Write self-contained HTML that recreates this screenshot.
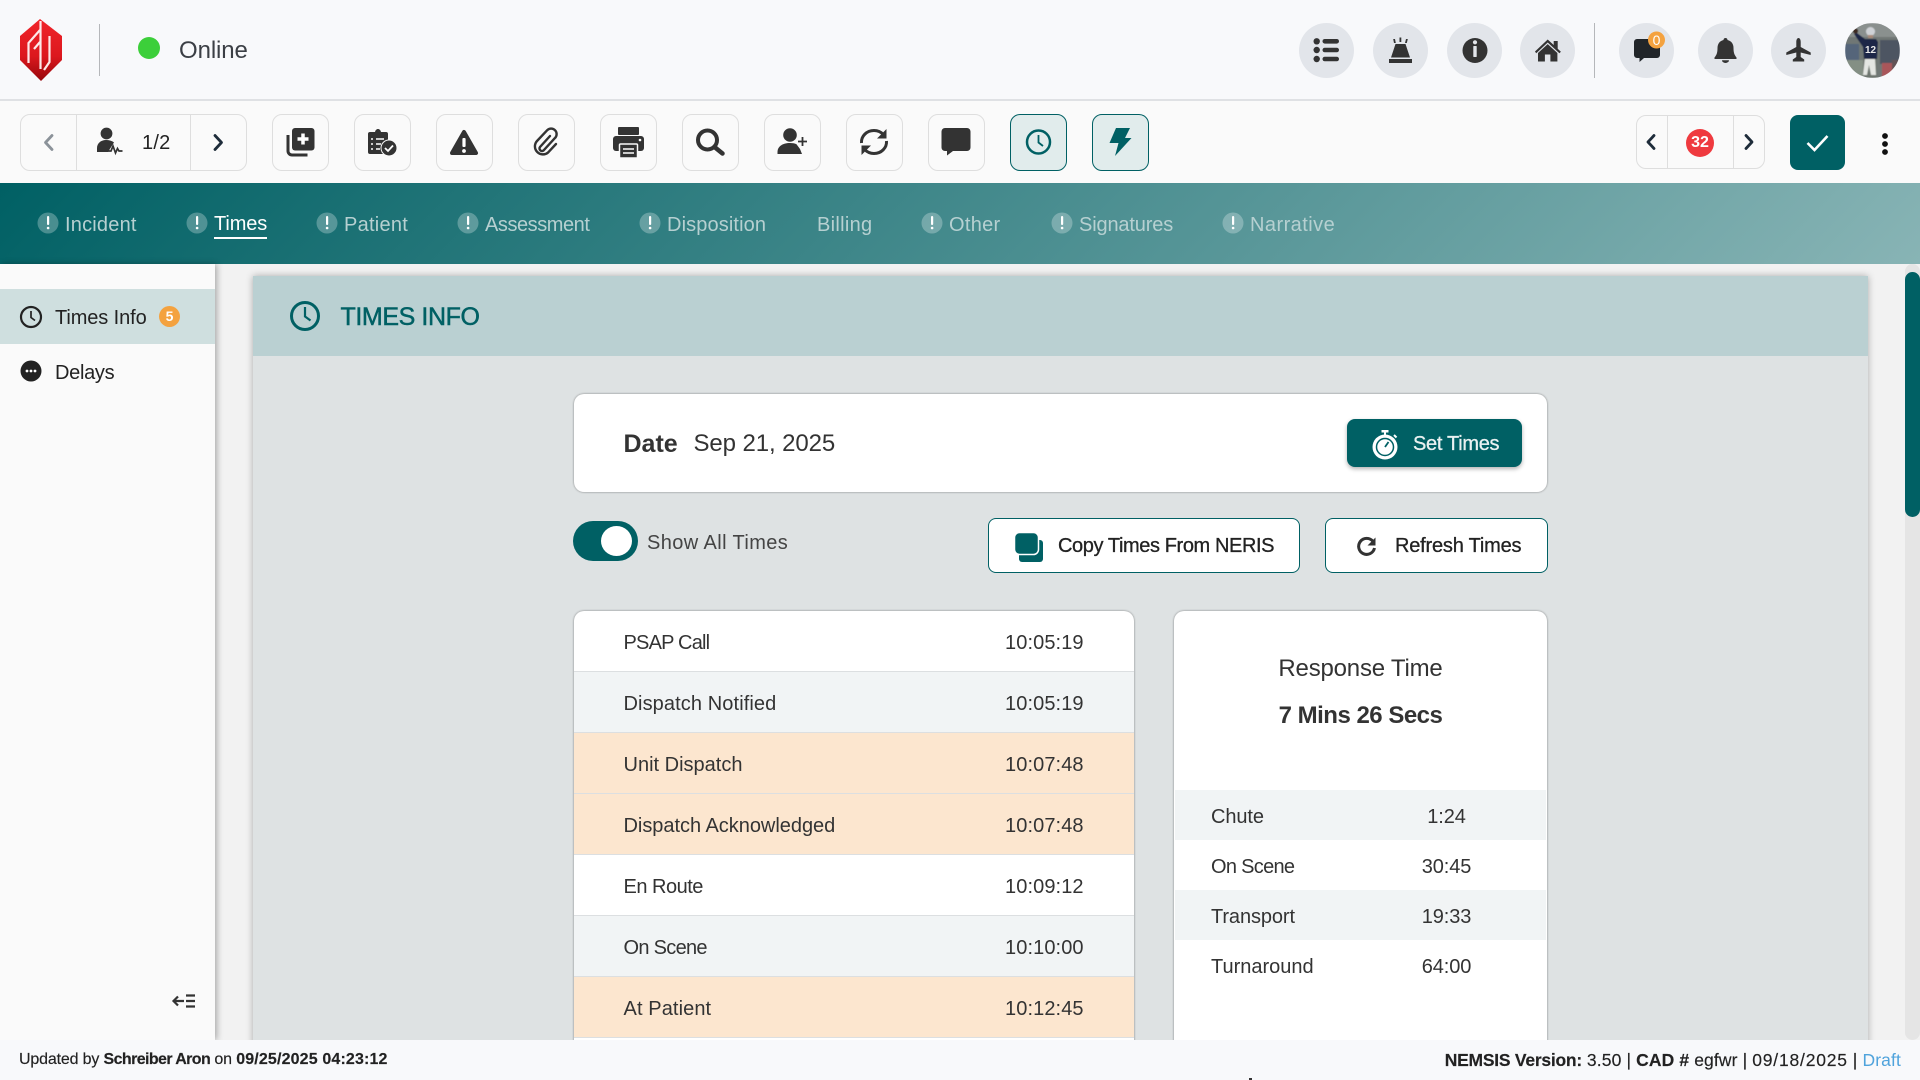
<!DOCTYPE html>
<html lang="en">
<head>
<meta charset="utf-8">
<title>Times Info</title>
<style>
html,body{margin:0;padding:0;width:1920px;height:1080px;overflow:hidden;background:#f2f2f2}
body{position:relative;font-family:"Liberation Sans",sans-serif;color:#333}
.a{position:absolute;box-sizing:border-box}
.t{position:absolute;white-space:nowrap;line-height:24px;font-size:20px;letter-spacing:-.1px}
.btn{position:absolute;box-sizing:border-box;top:114px;width:57px;height:57px;border:1px solid #dedede;border-radius:10px;background:#fafafa}
.btn.on{background:#e1ecec;border-color:#006064}
.c{position:absolute;top:23px;width:55px;height:55px;border-radius:50%;background:#e2e5ea}
.n{color:#b6d0d1;top:213px}
.row{position:absolute;box-sizing:border-box;left:574px;width:560px;height:61px;border-bottom:1px solid #dcdfe1}
.s{position:absolute;left:1175px;width:371px;height:50px}
.m{-webkit-text-stroke:.3px currentColor}
#ic{position:absolute;left:0;top:0;z-index:20;pointer-events:none}
</style>
</head>
<body>
<!-- top header -->
<div class="a" style="left:0;top:0;width:1920px;height:101px;background:#f8f9fb;border-bottom:2px solid #dfe1e4"></div>
<div class="a" style="left:99px;top:24px;width:1px;height:52px;background:#b5b7ba"></div>
<div class="a" style="left:138px;top:37px;width:22px;height:22px;border-radius:50%;background:#3ccf3a"></div>
<span class="t" style="left:179px;top:39px;font-size:24px;letter-spacing:-.1px;color:#3b3f45">Online</span>
<div class="c" style="left:1299px"></div>
<div class="c" style="left:1373px"></div>
<div class="c" style="left:1447px"></div>
<div class="c" style="left:1520px"></div>
<div class="a" style="left:1594px;top:23px;width:1px;height:55px;background:#b5b7ba"></div>
<div class="c" style="left:1619px"></div>
<div class="c" style="left:1698px"></div>
<div class="c" style="left:1771px"></div>

<!-- toolbar -->
<div class="a" style="left:0;top:101px;width:1920px;height:82px;background:#fafafa"></div>
<div class="a" style="left:20px;top:114px;width:227px;height:57px;border:1px solid #dedede;border-radius:10px"></div>
<div class="a" style="left:76px;top:114px;width:1px;height:57px;background:#dedede"></div>
<div class="a" style="left:190px;top:114px;width:1px;height:57px;background:#dedede"></div>
<span class="t" style="left:142px;top:131px;color:#222;letter-spacing:.2px">1/2</span>
<div class="btn" style="left:272px"></div>
<div class="btn" style="left:354px"></div>
<div class="btn" style="left:436px"></div>
<div class="btn" style="left:518px"></div>
<div class="btn" style="left:600px"></div>
<div class="btn" style="left:682px"></div>
<div class="btn" style="left:764px"></div>
<div class="btn" style="left:846px"></div>
<div class="btn" style="left:928px"></div>
<div class="btn on" style="left:1010px"></div>
<div class="btn on" style="left:1092px"></div>
<div class="a" style="left:1636px;top:115px;width:129px;height:54px;border:1px solid #dedede;border-radius:10px"></div>
<div class="a" style="left:1667px;top:115px;width:1px;height:54px;background:#dedede"></div>
<div class="a" style="left:1733px;top:115px;width:1px;height:54px;background:#dedede"></div>
<div class="a" style="left:1686px;top:129px;width:28px;height:28px;border-radius:50%;background:#ef3a3f;color:#fff;font-size:16px;font-weight:700;text-align:center;line-height:28px">32</div>
<div class="a" style="left:1790px;top:115px;width:55px;height:55px;border-radius:8px;background:#006064"></div>

<!-- main nav -->
<div class="a" style="left:0;top:183px;width:1920px;height:81px;background:linear-gradient(135deg,#006064 0%,#88b4b5 100%)"></div>
<span class="t n" style="left:65px;letter-spacing:.2px">Incident</span>
<span class="t n" style="left:214px;top:212px;color:#fff">Times</span>
<div class="a" style="left:214px;top:237px;width:53px;height:2px;background:#fff"></div>
<span class="t n" style="left:344px;letter-spacing:.25px">Patient</span>
<span class="t n" style="left:485px;letter-spacing:-.45px">Assessment</span>
<span class="t n" style="left:667px;letter-spacing:.12px">Disposition</span>
<span class="t n" style="left:817px;letter-spacing:.3px">Billing</span>
<span class="t n" style="left:949px;letter-spacing:.3px">Other</span>
<span class="t n" style="left:1079px;letter-spacing:-.15px">Signatures</span>
<span class="t n" style="left:1250px;letter-spacing:.45px">Narrative</span>

<!-- sidebar -->
<div class="a" style="left:0;top:264px;width:215px;height:776px;background:#fafafa;box-shadow:2px 0 6px rgba(0,0,0,.3)"></div>
<div class="a" style="left:0;top:289px;width:215px;height:55px;background:#cfdfdf"></div>
<span class="t" style="left:55px;top:306px;color:#222">Times Info</span>
<div class="a" style="left:159px;top:306px;width:21px;height:21px;border-radius:50%;background:#f4a23f;color:#fff;font-size:14px;font-weight:700;text-align:center;line-height:21px">5</div>
<span class="t" style="left:55px;top:361px;color:#222;letter-spacing:-.3px">Delays</span>

<!-- card -->
<div class="a" style="left:253px;top:276px;width:1615px;height:800px;background:#dee2e3;box-shadow:0 0 7px rgba(0,0,0,.3)"></div>
<div class="a" style="left:253px;top:276px;width:1615px;height:80px;background:#bad0d2"></div>
<span class="t m" style="left:340.500px;top:305px;font-size:25px;color:#006064;letter-spacing:-.4px;-webkit-text-stroke:.5px #006064">TIMES INFO</span>

<!-- date card -->
<div class="a" style="left:574px;top:394px;width:973px;height:98px;background:#fff;border-radius:10px;box-shadow:0 0 2px rgba(0,0,0,.45)"></div>
<span class="t" style="left:623.500px;top:432px;font-size:25px;font-weight:700;letter-spacing:0;color:#333">Date</span>
<span class="t" style="left:693.500px;top:432px;font-size:24px;color:#333;letter-spacing:-.1px">Sep 21, 2025</span>
<div class="a" style="left:1347px;top:419px;width:175px;height:48px;background:#006064;border-radius:8px;box-shadow:0 2px 4px rgba(0,0,0,.3)"></div>
<span class="t m" style="left:1413px;top:432px;color:#e9f1f1;letter-spacing:-.3px">Set Times</span>

<!-- toggle & buttons -->
<div class="a" style="left:573px;top:521px;width:65px;height:40px;border-radius:20px;background:#006064"></div>
<div class="a" style="left:601px;top:526px;width:31px;height:30px;border-radius:50%;background:#fff"></div>
<span class="t" style="left:647px;top:531px;color:#444;letter-spacing:.4px">Show All Times</span>
<div class="a" style="left:988px;top:518px;width:312px;height:55px;background:#fff;border:1px solid #006064;border-radius:8px"></div>
<span class="t m" style="left:1058px;top:534px;color:#222;letter-spacing:-.4px">Copy Times From NERIS</span>
<div class="a" style="left:1325px;top:518px;width:223px;height:55px;background:#fff;border:1px solid #006064;border-radius:8px"></div>
<span class="t m" style="left:1395px;top:534px;color:#222;letter-spacing:-.2px">Refresh Times</span>

<!-- times table -->
<div class="a" style="left:574px;top:611px;width:560px;height:470px;background:#fff;border-radius:10px;box-shadow:0 0 2px rgba(0,0,0,.45);overflow:hidden"></div>
<div class="row" style="top:611px;border-radius:10px 10px 0 0"></div>
<div class="row" style="top:672px;background:#f1f4f5"></div>
<div class="row" style="top:733px;background:#fce6cf"></div>
<div class="row" style="top:794px;background:#fce6cf"></div>
<div class="row" style="top:855px"></div>
<div class="row" style="top:916px;background:#f1f4f5"></div>
<div class="row" style="top:977px;background:#fce6cf"></div>
<span class="t" style="left:623.500px;top:630.500px;letter-spacing:-.8px">PSAP Call</span><span class="t" style="left:1005px;top:630.500px;letter-spacing:.1px">10:05:19</span>
<span class="t" style="left:623.500px;top:691.500px;letter-spacing:.1px">Dispatch Notified</span><span class="t" style="left:1005px;top:691.500px;letter-spacing:.1px">10:05:19</span>
<span class="t" style="left:623.500px;top:752.500px;letter-spacing:0">Unit Dispatch</span><span class="t" style="left:1005px;top:752.500px;letter-spacing:.1px">10:07:48</span>
<span class="t" style="left:623.500px;top:813.500px;letter-spacing:-.03px">Dispatch Acknowledged</span><span class="t" style="left:1005px;top:813.500px;letter-spacing:.1px">10:07:48</span>
<span class="t" style="left:623.500px;top:874.500px;letter-spacing:-.5px">En Route</span><span class="t" style="left:1005px;top:874.500px;letter-spacing:.1px">10:09:12</span>
<span class="t" style="left:623.500px;top:935.500px;letter-spacing:-.7px">On Scene</span><span class="t" style="left:1005px;top:935.500px;letter-spacing:.1px">10:10:00</span>
<span class="t" style="left:623.500px;top:996.500px;letter-spacing:.1px">At Patient</span><span class="t" style="left:1005px;top:996.500px;letter-spacing:.1px">10:12:45</span>

<!-- response box -->
<div class="a" style="left:1174px;top:611px;width:373px;height:470px;background:#fff;border-radius:10px;box-shadow:0 0 2px rgba(0,0,0,.45)"></div>
<span class="t" style="left:1174px;width:373px;text-align:center;top:657px;font-size:24px;letter-spacing:-.2px">Response Time</span>
<span class="t" style="left:1174px;width:373px;text-align:center;top:704px;font-size:24px;font-weight:700;letter-spacing:-.5px">7 Mins 26 Secs</span>
<div class="s" style="top:790px;background:#f1f4f5"></div>
<div class="s" style="top:890px;background:#f1f4f5"></div>
<span class="t" style="left:1211px;top:804.500px">Chute</span><span class="t" style="left:1346.500px;width:200px;text-align:center;top:804.500px">1:24</span>
<span class="t" style="left:1211px;top:854.500px;letter-spacing:-.7px">On Scene</span><span class="t" style="left:1346.500px;width:200px;text-align:center;top:854.500px">30:45</span>
<span class="t" style="left:1211px;top:904.500px">Transport</span><span class="t" style="left:1346.500px;width:200px;text-align:center;top:904.500px">19:33</span>
<span class="t" style="left:1211px;top:954.500px;letter-spacing:0">Turnaround</span><span class="t" style="left:1346.500px;width:200px;text-align:center;top:954.500px">64:00</span>

<!-- scrollbar -->
<div class="a" style="left:1905px;top:264px;width:15px;height:776px;background:#e5e5e5;border-radius:8px"></div>
<div class="a" style="left:1905px;top:272px;width:15px;height:245px;background:#006064;border-radius:8px"></div>

<!-- footer -->
<div class="a" style="left:0;top:1040px;width:1920px;height:40px;background:#f8f9fb;z-index:10"></div>
<div class="a" style="left:1249px;top:1078px;width:3px;height:2px;background:#333;z-index:11"></div>
<span class="t m" style="left:19px;top:1048px;font-size:16px;color:#222;z-index:11;letter-spacing:-.16px;-webkit-text-stroke:.15px #222">Updated by <b style="letter-spacing:-.6px">Schreiber Aron</b> on <b style="letter-spacing:.15px">09/25/2025 04:23:12</b></span>
<span class="t m" style="right:19px;top:1048px;font-size:17.500px;color:#222;z-index:11;letter-spacing:.12px;-webkit-text-stroke:.15px #222"><b style="letter-spacing:-.25px">NEMSIS Version:</b> 3.50 | <b>CAD #</b> egfwr | <span style="letter-spacing:.8px">09/18/2025</span> | <span style="color:#4fa3dc;-webkit-text-stroke:0">Draft</span></span>

<!-- icon layer -->
<svg id="ic" width="1920" height="1080" viewBox="0 0 1920 1080" xmlns="http://www.w3.org/2000/svg">
<defs>
<linearGradient id="lg" x1="0" y1="0" x2="0" y2="1"><stop offset="0" stop-color="#f0242a"/><stop offset=".6" stop-color="#dc181e"/><stop offset="1" stop-color="#96070c"/></linearGradient>
<clipPath id="av"><circle cx="1872.500" cy="50.500" r="27.500"/></clipPath>
<filter id="bl"><feGaussianBlur stdDeviation=".6"/></filter>
</defs>
<!-- logo -->
<path d="M40 19 L62 36 V60 L41 81 L20 60 V36 Z" fill="url(#lg)"/>
<path d="M40.500 21 V69 M40 30 L28.500 43 V63 M40 42 L34 49 M49.500 36 V62 L44 70" fill="none" stroke="#fde9e9" stroke-width="2.200"/>

<!-- header icons -->
<g fill="#333">
<circle cx="1316.700" cy="41.300" r="3.200"/><circle cx="1316.700" cy="50" r="3.200"/><circle cx="1316.700" cy="59" r="3.200"/>
<rect x="1322.500" y="39" width="16.500" height="4.600" rx="2.300"/><rect x="1322.500" y="47.700" width="16.500" height="4.600" rx="2.300"/><rect x="1322.500" y="56.700" width="16.500" height="4.600" rx="2.300"/>
<path d="M1395.500 44h10l4.500 13.500h-19z"/><rect x="1389" y="59" width="23" height="4"/>
<path d="M1394 43l-.8-4h1.800l.8 4zM1399.500 42v-4.500h1.800v4.500zM1405 43l1-4h1.800l-1 4z"/>
<circle cx="1475" cy="50.500" r="12.500"/>
<path d="M1535 51.500l12.700-12 6 5.500v-4h4v7.800l3.200 2.900-1.500 1.500-11.700-10.700-11.500 10.700zM1538 53l9.700-8.900 9.700 8.900v8.500h-7v-7h-5.500v7h-6.900z"/>
<path d="M1725.500 38c1.100 0 2 .8 2 2 4 1 6 4 6 8 0 5 1 7 3 9.500v1.500h-22v-1.500c2-2.500 3-4.500 3-9.500 0-4 2-7 6-8 0-1.200.9-2 2-2zM1722 60.200h7a3.500 2.800 0 0 1-7 0z"/>
<path d="M1798.500 38c1.500 0 2.200 2 2.200 4v5l10 5.500v2.500l-10-2.500v4.500l3.500 2.500v2h-11.400v-2l3.500-2.500v-4.500l-10 2.500v-2.500l10-5.500v-5c0-2 .7-4 2.200-4z"/>
</g>
<rect x="1473.300" y="46" width="3.400" height="11" fill="#e2e5ea" rx=".5"/><circle cx="1475" cy="42.300" r="2.100" fill="#e2e5ea"/>
<path d="M1637 39h20a3 3 0 0 1 3 3v13a3 3 0 0 1-3 3h-13l-4.500 4v-4H1637a3 3 0 0 1-3-3V42a3 3 0 0 1 3-3z" fill="#212529"/>
<circle cx="1656.500" cy="40" r="8.500" fill="#f4a23f"/>
<text x="1656.500" y="45" font-family="Liberation Sans" font-size="14" fill="#fff" text-anchor="middle">0</text>

<!-- avatar -->
<g clip-path="url(#av)">
<g filter="url(#bl)">
<rect x="1845" y="23" width="55" height="55" fill="#6f7775"/>
<rect x="1845" y="23" width="55" height="14" fill="#8a908e"/>
<rect x="1845" y="44" width="14" height="16" fill="#55657a"/>
<rect x="1880" y="40" width="20" height="24" fill="#4e5462"/>
<rect x="1882" y="63" width="10" height="15" fill="#a9565a"/>
<rect x="1892" y="60" width="8" height="18" fill="#625257"/>
<rect x="1845" y="60" width="18" height="18" fill="#848f84"/>
<rect x="1863" y="56" width="14" height="22" fill="#6d756e"/>
<path d="M1865 58l-2 17h4l2-10 2 10h5l-1-17z" fill="#e4e6e2"/>
<path d="M1854 34l3-1 8 6h11l2 3-1 17h-13l-1-12z" fill="#1b2747"/>
<circle cx="1870.500" cy="31.500" r="4.500" fill="#cfd2d6"/>
<rect x="1868" y="35" width="5" height="3" fill="#a98a78"/>
<circle cx="1855.500" cy="31" r="2.600" fill="#3d2c22"/>
</g>
<text x="1870.500" y="53" font-family="Liberation Sans" font-size="10" font-weight="700" fill="#e8e8e8" text-anchor="middle">12</text>
</g>

<!-- toolbar chevrons -->
<path d="M52 135.500l-6.500 7 6.500 7" fill="none" stroke="#8b9299" stroke-width="2.800" stroke-linecap="round" stroke-linejoin="round"/>
<path d="M215 135.500l6.500 7-6.500 7" fill="none" stroke="#1e2c3a" stroke-width="2.800" stroke-linecap="round" stroke-linejoin="round"/>
<path d="M1654 135.500l-6 6.500 6 6.500" fill="none" stroke="#1e2c3a" stroke-width="2.800" stroke-linecap="round" stroke-linejoin="round"/>
<path d="M1746 135.500l6 6.500-6 6.500" fill="none" stroke="#1e2c3a" stroke-width="2.800" stroke-linecap="round" stroke-linejoin="round"/>

<!-- patient -->
<circle cx="106.500" cy="133.500" r="5.900" fill="#333"/>
<path d="M97 152v-4c0-4.800 4-8 9-8 3.200 0 6 .8 8 2.400L108 152z" fill="#333"/>
<path d="M108 151h3l2-5 2.500 7 2-4.500 1.500 2.500h3.500" fill="none" stroke="#333" stroke-width="1.700"/>

<!-- copy plus -->
<rect x="292" y="128" width="22.500" height="22.500" rx="3" fill="#333"/>
<path d="M288 135v16a4 4 0 0 0 4 4h15.500" fill="none" stroke="#333" stroke-width="3"/>
<path d="M303 133.500v11M297.500 139h11" stroke="#fff" stroke-width="3.500"/>

<!-- clipboard check -->
<path d="M370 132h5c.4-1.800 1.500-3 3-3s2.600 1.200 3 3h5a2 2 0 0 1 2 2v18a2 2 0 0 1-2 2h-16a2 2 0 0 1-2-2v-18a2 2 0 0 1 2-2z" fill="#333"/>
<path d="M371 139h2M371 144h2M371 149h2M376 139h8M376 144h5M376 149h4" stroke="#fff" stroke-width="1.600"/>
<circle cx="389" cy="148" r="8" fill="#333" stroke="#fafafa" stroke-width="1"/>
<path d="M385 148l3 3 5-5.500" fill="none" stroke="#fff" stroke-width="1.800"/>

<!-- warning -->
<path d="M464 132L476 153H452Z" fill="#333" stroke="#333" stroke-width="4" stroke-linejoin="round"/>
<rect x="462.400" y="138" width="3.200" height="9" rx="1" fill="#fff"/><circle cx="464" cy="151" r="1.900" fill="#fff"/>

<!-- paperclip -->
<path d="M550 136l-10 11a2.500 2.500 0 0 0 3.500 3.500L555 138a5.500 5.500 0 0 0-7.800-7.800L537 141a8 8 0 0 0 11.300 11.300L556 144" fill="none" stroke="#333" stroke-width="2.400" stroke-linecap="round"/>

<!-- printer -->
<rect x="618" y="127" width="21" height="8" rx="1" fill="#333"/>
<rect x="613" y="136" width="31" height="15" rx="3" fill="#333"/>
<rect x="619.500" y="144" width="18" height="14" rx="1" fill="#333" stroke="#fafafa" stroke-width="1.500"/>
<path d="M623 149h11M623 153h11" stroke="#fff" stroke-width="1.600"/>
<circle cx="640" cy="140" r="1.300" fill="#fff"/>

<!-- search -->
<circle cx="707.500" cy="140" r="9.500" fill="none" stroke="#333" stroke-width="4"/>
<path d="M714.500 147l8 6.500" stroke="#333" stroke-width="4.500" stroke-linecap="round"/>

<!-- user plus -->
<circle cx="790" cy="135" r="6.800" fill="#333"/>
<path d="M777.500 154v-2c0-5.500 5-9 12.500-9 2.500 0 4.600.4 6.500 1.200L800 149l2 5z" fill="#333"/>
<path d="M802.500 137v9M798 141.500h9" stroke="#333" stroke-width="1.800"/>

<!-- sync -->
<path d="M861.500 143c-.5-7 5.300-12.500 12.500-12.500 3.700 0 7 1.500 9.300 4" fill="none" stroke="#333" stroke-width="3"/>
<path d="M886.500 141c.5 7-5.300 12.500-12.500 12.500-3.700 0-7-1.500-9.300-4" fill="none" stroke="#333" stroke-width="3"/>
<path d="M886.500 129v9.500h-9.500zM861.500 155v-9.500h9.500z" fill="#333"/>

<!-- comment -->
<path d="M945 128h22a3.500 3.500 0 0 1 3.500 3.500v16a3.500 3.500 0 0 1-3.500 3.500h-14l-6 4.500V151h-2a3.500 3.500 0 0 1-3.500-3.500v-16A3.500 3.500 0 0 1 945 128z" fill="#333"/>

<!-- clock btn -->
<circle cx="1038.500" cy="142" r="11.500" fill="none" stroke="#006064" stroke-width="2.500"/>
<path d="M1038.500 135v7.500l4.500 3.500" fill="none" stroke="#006064" stroke-width="1.800"/>
<!-- bolt -->
<path d="M1116 128h14l-5 10h6.500L1115 156l3.500-13h-9z" fill="#006064"/>

<!-- check + kebab -->
<path d="M1807.500 143l7 7 13-14" fill="none" stroke="#fff" stroke-width="2.600"/>
<g fill="#111"><circle cx="1885" cy="136" r="2.900"/><circle cx="1885" cy="144" r="2.900"/><circle cx="1885" cy="152" r="2.900"/></g>

<!-- nav alert icons -->
<g>
<circle cx="48" cy="223" r="10.500" fill="#fff" fill-opacity=".27"/><rect x="47" y="216" width="2.200" height="9" rx="1" fill="#fff"/><circle cx="48.100" cy="228" r="1.300" fill="#fff"/>
<circle cx="197" cy="223" r="10.500" fill="#fff" fill-opacity=".27"/><rect x="196" y="216" width="2.200" height="9" rx="1" fill="#fff"/><circle cx="197.100" cy="228" r="1.300" fill="#fff"/>
<circle cx="327" cy="223" r="10.500" fill="#fff" fill-opacity=".27"/><rect x="326" y="216" width="2.200" height="9" rx="1" fill="#fff"/><circle cx="327.100" cy="228" r="1.300" fill="#fff"/>
<circle cx="468" cy="223" r="10.500" fill="#fff" fill-opacity=".27"/><rect x="467" y="216" width="2.200" height="9" rx="1" fill="#fff"/><circle cx="468.100" cy="228" r="1.300" fill="#fff"/>
<circle cx="650" cy="223" r="10.500" fill="#fff" fill-opacity=".27"/><rect x="649" y="216" width="2.200" height="9" rx="1" fill="#fff"/><circle cx="650.100" cy="228" r="1.300" fill="#fff"/>
<circle cx="932" cy="223" r="10.500" fill="#fff" fill-opacity=".27"/><rect x="931" y="216" width="2.200" height="9" rx="1" fill="#fff"/><circle cx="932.100" cy="228" r="1.300" fill="#fff"/>
<circle cx="1062" cy="223" r="10.500" fill="#fff" fill-opacity=".27"/><rect x="1061" y="216" width="2.200" height="9" rx="1" fill="#fff"/><circle cx="1062.100" cy="228" r="1.300" fill="#fff"/>
<circle cx="1233" cy="223" r="10.500" fill="#fff" fill-opacity=".27"/><rect x="1232" y="216" width="2.200" height="9" rx="1" fill="#fff"/><circle cx="1233.100" cy="228" r="1.300" fill="#fff"/>
</g>

<!-- sidebar icons -->
<circle cx="31" cy="317" r="10" fill="none" stroke="#222" stroke-width="2.200"/>
<path d="M31 311v6.500l4 3" fill="none" stroke="#222" stroke-width="1.700"/>
<circle cx="31" cy="371" r="10.500" fill="#222"/>
<g fill="#fff"><circle cx="27" cy="371" r="1.400"/><circle cx="31" cy="371" r="1.400"/><circle cx="35" cy="371" r="1.400"/></g>
<path d="M184 1001h-10M178 996.500l-4.500 4.500 4.500 4.500M186 995.500h9M186 1001h9M186 1006.500h9" fill="none" stroke="#333" stroke-width="2.200"/>

<!-- header clock -->
<circle cx="305" cy="316" r="13.500" fill="none" stroke="#006064" stroke-width="3"/>
<path d="M305 307v9.500l5.500 4" fill="none" stroke="#006064" stroke-width="2.200"/>

<!-- stopwatch -->
<circle cx="1385" cy="447" r="12.500" fill="#fff"/>
<circle cx="1385" cy="447" r="8.500" fill="none" stroke="#006064" stroke-width="1.500"/>
<path d="M1385 447l3.500-5" stroke="#006064" stroke-width="1.800"/>
<rect x="1381.500" y="430" width="7" height="2.500" fill="#fff"/><rect x="1384" y="432" width="2" height="3" fill="#fff"/>
<path d="M1394 435l2.500 2.500" stroke="#fff" stroke-width="2"/>

<!-- copy icon -->
<rect x="1019" y="540" width="24" height="22" rx="3" fill="#006064"/>
<rect x="1014.500" y="532.500" width="24" height="22" rx="5" fill="#006064" stroke="#fff" stroke-width="1.500"/>

<!-- refresh icon -->
<path d="M1373 541.500a8 8 0 1 0 1.500 6.500" fill="none" stroke="#333" stroke-width="3"/>
<path d="M1375.500 537.500v8h-8z" fill="#333"/>
</svg>
</body>
</html>
